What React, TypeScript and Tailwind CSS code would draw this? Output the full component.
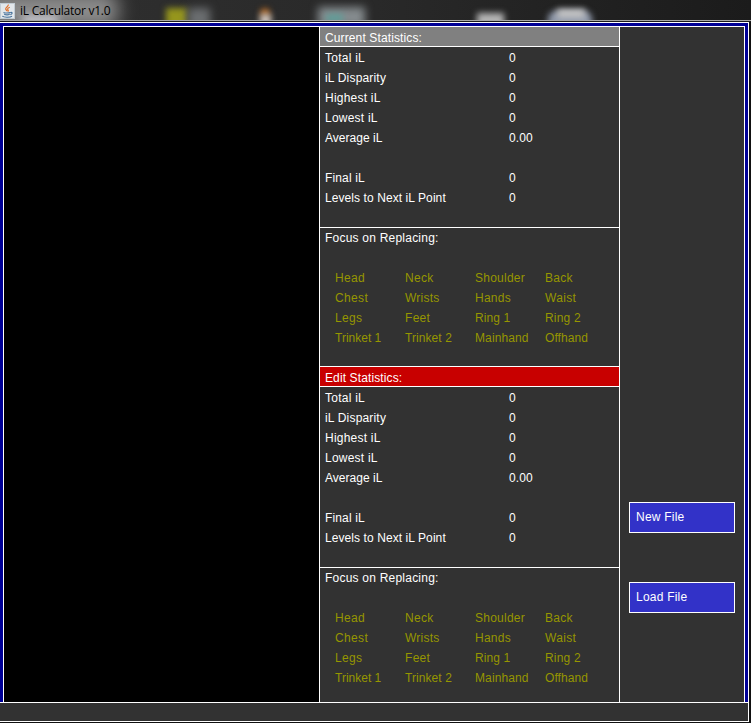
type Item = { label: string; tracking: string };
type Stat = Item & { value: string };

const STATS: (Stat | null)[] = [
  { label: 'Total iL', value: '0', tracking: 'tracking-[0.25px]' },
  { label: 'iL Disparity', value: '0', tracking: 'tracking-[0.18px]' },
  { label: 'Highest iL', value: '0', tracking: 'tracking-[0.22px]' },
  { label: 'Lowest iL', value: '0', tracking: 'tracking-[0.22px]' },
  { label: 'Average iL', value: '0.00', tracking: 'tracking-[0.02px]' },
  null,
  { label: 'Final iL', value: '0', tracking: 'tracking-[0.15px]' },
  { label: 'Levels to Next iL Point', value: '0', tracking: 'tracking-[0.08px]' },
];

const SLOTS: Item[] = [
  { label: 'Head', tracking: 'tracking-[0.3px]' },
  { label: 'Neck', tracking: 'tracking-[0.3px]' },
  { label: 'Shoulder', tracking: 'tracking-[0.25px]' },
  { label: 'Back', tracking: 'tracking-[0.3px]' },
  { label: 'Chest', tracking: 'tracking-[0.35px]' },
  { label: 'Wrists', tracking: 'tracking-[0.25px]' },
  { label: 'Hands', tracking: 'tracking-[0.25px]' },
  { label: 'Waist', tracking: 'tracking-[0.35px]' },
  { label: 'Legs', tracking: 'tracking-[0.3px]' },
  { label: 'Feet', tracking: 'tracking-[0.3px]' },
  { label: 'Ring 1', tracking: 'tracking-[0.1px]' },
  { label: 'Ring 2', tracking: 'tracking-[0.2px]' },
  { label: 'Trinket 1', tracking: 'tracking-normal' },
  { label: 'Trinket 2', tracking: 'tracking-[0.08px]' },
  { label: 'Mainhand', tracking: 'tracking-[0.12px]' },
  { label: 'Offhand', tracking: 'tracking-[0.08px]' },
];

function JavaIcon() {
  return (
    <svg width="15" height="16" viewBox="0 0 15 16" className="shrink-0" fill="none">
      <rect width="15" height="16" fill="#e2e7eb" />
      <rect x="0.5" y="0.5" width="14" height="15" stroke="#c2ccd4" />
      <path d="M8.200 1.500c.8 2-3 2.700-2.500 4.500.2.900 1.300 1.400 1.300 2.200M9.800 4.300C7.800 5 7.100 5.900 8 6.900c.6.600.2 1.200-.3 1.600" stroke="#e0702a" strokeWidth="1.200" />
      <path d="M3.500 9.500c1.500.8 5.500.7 6.900 0M4.200 11.200c1.500.7 4.200.7 5.500 0M10.500 9.500c2.200-.7 2.400 1.500-.2 2.200M2.300 13.200c1.500 1.400 8.400 1.300 9.700-.1" stroke="#44709a" strokeWidth="1.100" />
    </svg>
  );
}

function TitleBar() {
  return (
    <header className="relative flex h-5 shrink-0 items-start overflow-hidden bg-linear-to-r from-[#303030] via-[#292929] to-[#1b1b1b]">
      <div className="absolute -left-4 -top-2 h-9 w-[134px] rounded-xl bg-[#8c8c8c] blur-[9px]" />
      <div className="absolute left-[22px] top-4 h-2 w-9 bg-[#d4d4dc] blur-[4px]" />
      <div className="absolute left-[166px] top-2 h-5 w-[21px] bg-[#96961c] blur-[3px]" />
      <div className="absolute left-[188px] top-2 h-5 w-[22px] bg-[#6b6e70] blur-[4px]" />
      <div className="absolute left-[261px] top-[9px] h-[7px] w-2 bg-[#c87020] blur-[3px]" />
      <div className="absolute left-[260px] top-[14px] h-3 w-[11px] bg-[#d5c9c0] blur-[3px]" />
      <div className="absolute left-[318px] top-[7px] h-5 w-[47px] bg-[#858b8e] blur-[4px]" />
      <div className="absolute left-[326px] top-[14px] h-2 w-[17px] bg-[#5f9d98] blur-[3px]" />
      <div className="absolute left-[477px] top-[13px] h-4 w-[27px] bg-[#b5b5b5] blur-[3px]" />
      <div className="absolute left-[548px] top-[11px] h-5 w-[44px] rounded-t-lg bg-[#8f98aa] blur-[3px]" />
      <div className="absolute left-[557px] top-[9px] h-[9px] w-[28px] bg-[#c6c6c6] blur-[3px]" />
      <div className="relative flex h-5 items-start">
        <div className="pt-[3px]">
          <JavaIcon />
        </div>
        <span className="ml-[5px] mt-px font-['Open_Sans',sans-serif] text-[12px] leading-5 tracking-[-0.25px] text-black">
          iL Calculator v1.0
        </span>
      </div>
    </header>
  );
}

function Panel({ title, color, last }: { title: string; color: string; last?: boolean }) {
  return (
    <section className="flex flex-col">
      <h2 className={`h-5 border-b border-white pl-[5px] leading-[22px] tracking-[0.12px] ${color}`}>{title}</h2>
      <div className="h-[181px] border-b border-white pl-[5px]">
        {STATS.map((s, i) => (
          <div key={i} className="flex h-5 leading-[22px]">
            <span className={`w-[184px] ${s?.tracking ?? ''}`}>{s?.label}</span>
            <span className="tracking-[0.1px]">{s?.value}</span>
          </div>
        ))}
      </div>
      <div className={last ? 'h-[134px]' : 'h-[139px] border-b border-white'}>
        <h3 className="h-5 pl-[5px] leading-[20px] tracking-[0.22px]">Focus on Replacing:</h3>
        <div className="mt-5 grid grid-cols-[70px_70px_70px_70px] pl-[15px] text-[#969600]">
          {SLOTS.map((s) => (
            <span key={s.label} className={`h-5 whitespace-nowrap leading-[20px] ${s.tracking}`}>{s.label}</span>
          ))}
        </div>
      </div>
    </section>
  );
}

function FileButton({ children }: { children: string }) {
  return (
    <button className="flex h-[31px] w-[106px] items-start border border-white bg-[#3232c8] pl-[6px] text-left leading-[28px] tracking-[0.22px]">
      {children}
    </button>
  );
}

export default function App() {
  return (
    <div className="flex h-[723px] w-[751px] flex-col overflow-hidden bg-[#111] font-['Liberation_Sans',Arial,sans-serif] text-[12px] text-white">
      <TitleBar />
      <div className="h-px shrink-0 bg-[#a8a8a8]" />
      <div className="h-px shrink-0 bg-[#1c1c1c]" />
      <div className="flex h-[700px] w-[749px] flex-col border-y border-r border-white bg-[#323232]">
        <main className="flex h-[679px] bg-[#000096] pr-[3px] pl-[3px] pt-[3px]">
          <div className="flex h-[676px] w-[742px] border-x border-t border-white bg-[#323232]">
            <div className="w-[315px] bg-black" />
            <div className="w-[301px] border-x border-white">
              <Panel title="Current Statistics:" color="bg-[#808080]" />
              <Panel title="Edit Statistics:" color="bg-[#c80000]" last />
            </div>
            <aside className="flex flex-col gap-[49px] pl-[9px] pt-[475px]">
              <FileButton>New File</FileButton>
              <FileButton>Load File</FileButton>
            </aside>
          </div>
        </main>
        <footer className="h-[19px] border-t border-white bg-[#323232]" />
      </div>
    </div>
  );
}
